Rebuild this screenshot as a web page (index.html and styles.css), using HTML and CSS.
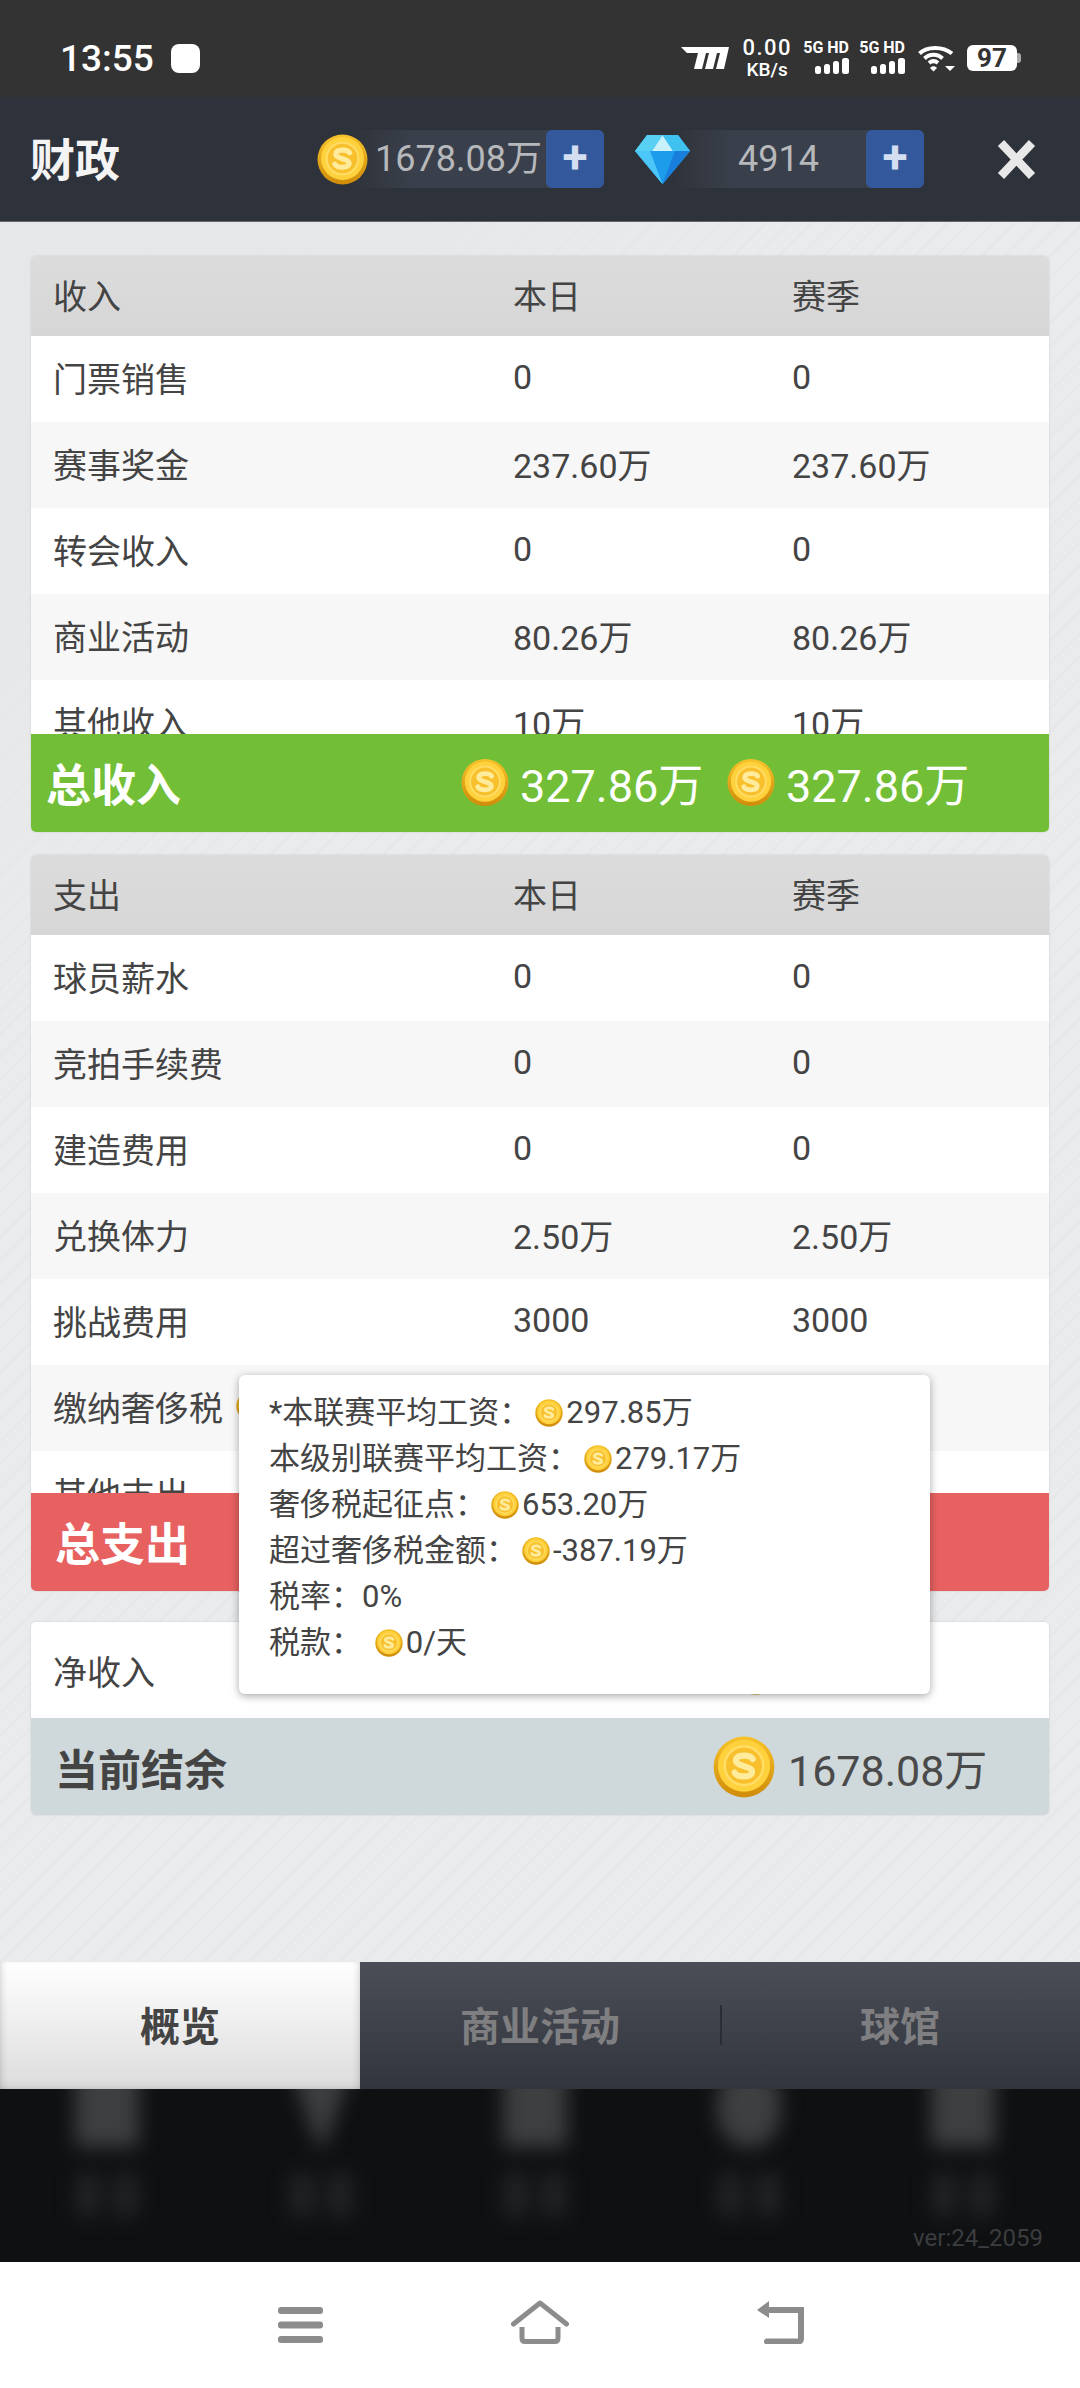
FILE: index.html
```html
<!DOCTYPE html>
<html lang="zh-CN">
<head>
  <meta charset="UTF-8">
  <title>财政</title>
  <meta name="viewport" content="width=device-width, initial-scale=1.0">
  <link rel="stylesheet" href="styles.css">
</head>
<body>
  <svg class="defs" width="0" height="0">
    <defs>
      <linearGradient id="coin-rim" x1="0" y1="0" x2="0" y2="1">
        <stop offset="0" stop-color="#f6c22a"/>
        <stop offset="1" stop-color="#d08c0a"/>
      </linearGradient>
      <symbol id="coin" viewBox="0 0 50 50">
        <circle cx="25" cy="25" r="24.500" fill="url(#coin-rim)"/>
        <circle cx="25" cy="24" r="21" fill="#ffd13d"/>
        <circle cx="25" cy="24" r="15.500" fill="#f8c02c" stroke="#ffdd66" stroke-width="2"/>
        <path d="M32 18.500c-2-3.500-13-4-13.500 1s13.500 4.500 13 9.500-12 4.500-14 .5" fill="none" stroke="#ffeb9c" stroke-width="5" stroke-linecap="round"/>
      </symbol>
    </defs>
  </svg>

  <div class="page">
    <div class="status-bar">
      <span class="clock">13:55</span>
      <span class="blob"></span>
      <div class="status-icons">
        <svg class="carrier" width="48" height="22" viewBox="0 0 48 22"><path d="M0 0h48l-5 22h-8l4-16h-3l-4 16h-8l4-16h-3l-4 16H13L17 6H6z" fill="#fff"/></svg>
        <div class="speed"><span class="speed-num">0.00</span><span class="speed-unit">KB/s</span></div>
        <div class="sim"><span class="sim-label">5G HD</span>
          <svg width="34" height="16" viewBox="0 0 34 16"><g fill="#fff"><rect x="0" y="8" width="6" height="8" rx="2.500"/><rect x="9" y="6" width="6" height="10" rx="2.500"/><rect x="18" y="3" width="6" height="13" rx="2.500"/><rect x="27" y="0" width="7" height="16" rx="2.500"/></g></svg>
        </div>
        <div class="sim"><span class="sim-label">5G HD</span>
          <svg width="34" height="16" viewBox="0 0 34 16"><g fill="#fff"><rect x="0" y="8" width="6" height="8" rx="2.500"/><rect x="9" y="6" width="6" height="10" rx="2.500"/><rect x="18" y="3" width="6" height="13" rx="2.500"/><rect x="27" y="0" width="7" height="16" rx="2.500"/></g></svg>
        </div>
        <svg class="wifi" width="37" height="27" viewBox="0 0 37 27">
          <g fill="none" stroke="#fff" stroke-width="4"><path d="M1.500 8.500C9 1 25 1 34 8.500"/><path d="M6.500 13.500c5-5 13-5 18 0"/><path d="M11 18c3-2.500 6-2.500 9 0"/></g>
          <path d="M12 23c2-2.500 5-2.500 7 0l-3.500 3.500z" fill="#fff"/>
          <path d="M27 21h10l-5 5z" fill="#fff"/>
        </svg>
        <div class="battery"><span class="battery-num">97</span></div>
      </div>
    </div>

    <header class="top-bar">
      <h1 class="title">财政</h1>
      <div class="currency">
        <svg class="coin-top"><use href="#coin"/></svg>
        <div class="pill"><span class="pill-value">1678.08万</span><span class="pill-plus">+</span></div>
      </div>
      <div class="currency second">
        <svg class="gem" width="55" height="50" viewBox="0 0 55 50">
          <polygon points="12,1 43,1 55,17 27.500,50 0,17" fill="#34b8f2"/>
          <polygon points="0,17 55,17 27.500,50" fill="#1e9cec"/>
          <polygon points="40,17 55,17 27.500,50" fill="#1a7fdc"/>
          <polygon points="0,17 15,17 27.500,50" fill="#4cc6f6"/>
          <polygon points="27.500,1 38,17 17,17" fill="#c9f1fb"/>
          <polygon points="12,1 27.500,1 17,17 0,17" fill="#58d0f4"/>
          <polygon points="43,1 27.500,1 38,17 55,17" fill="#3fc2f0"/>
        </svg>
        <div class="pill"><span class="pill-value">4914</span><span class="pill-plus">+</span></div>
      </div>
      <svg class="close" width="39" height="39" viewBox="0 0 39 39"><path d="M4 3l31 33M35 3L4 36" stroke="#e8e8e8" stroke-width="8.500" fill="none"/></svg>
    </header>

    <main class="content">
      <section class="panel">
        <div class="row head"><span>收入</span><span>本日</span><span>赛季</span></div>
        <div class="rows income">
          <div class="row"><span>门票销售</span><span>0</span><span>0</span></div>
          <div class="row"><span>赛事奖金</span><span>237.60万</span><span>237.60万</span></div>
          <div class="row"><span>转会收入</span><span>0</span><span>0</span></div>
          <div class="row"><span>商业活动</span><span>80.26万</span><span>80.26万</span></div>
          <div class="row"><span>其他收入</span><span>10万</span><span>10万</span></div>
        </div>
        <div class="total green">
          <span class="total-label">总收入</span>
          <span class="total-val"><svg class="coin-big"><use href="#coin"/></svg>327.86万</span>
          <span class="total-val"><svg class="coin-big"><use href="#coin"/></svg>327.86万</span>
        </div>
      </section>

      <section class="panel">
        <div class="row head"><span>支出</span><span>本日</span><span>赛季</span></div>
        <div class="rows spend">
          <div class="row"><span>球员薪水</span><span>0</span><span>0</span></div>
          <div class="row"><span>竞拍手续费</span><span>0</span><span>0</span></div>
          <div class="row"><span>建造费用</span><span>0</span><span>0</span></div>
          <div class="row"><span>兑换体力</span><span>2.50万</span><span>2.50万</span></div>
          <div class="row"><span>挑战费用</span><span>3000</span><span>3000</span></div>
          <div class="row"><span class="tax-cell">缴纳奢侈税<svg class="coin-row"><use href="#coin"/></svg></span></div>
          <div class="row"><span>其他支出</span></div>
        </div>
        <div class="total red"><span class="total-label">总支出</span></div>
      </section>

      <section class="panel">
        <div class="row net"><span>净收入</span><svg class="coin-net"><use href="#coin"/></svg></div>
        <div class="balance">
          <span class="balance-label">当前结余</span>
          <span class="balance-val"><svg class="coin-balance"><use href="#coin"/></svg>1678.08万</span>
        </div>
      </section>
    </main>

    <nav class="tabs">
      <div class="tab active">概览</div>
      <div class="tab">商业活动</div>
      <div class="tab split">球馆</div>
    </nav>

    <div class="game-nav">
      <div class="blur-items">
        <div class="blur-item"><i class="blur-icon"></i><div class="blur-label"><i></i><i></i></div></div>
        <div class="blur-item"><i class="blur-icon narrow"></i><div class="blur-label"><i></i><i></i></div></div>
        <div class="blur-item"><i class="blur-icon"></i><div class="blur-label"><i></i><i></i></div></div>
        <div class="blur-item"><i class="blur-icon round"></i><div class="blur-label"><i></i><i></i></div></div>
        <div class="blur-item"><i class="blur-icon"></i><div class="blur-label"><i></i><i></i></div></div>
      </div>
      <div class="version">ver:24_2059</div>
    </div>

    <div class="sys-nav">
      <svg width="45" height="36" viewBox="0 0 45 36"><g fill="#8c8c8c"><rect x="0" y="0" width="45" height="7" rx="3"/><rect x="0" y="14.500" width="45" height="7" rx="3"/><rect x="0" y="29" width="45" height="7" rx="3"/></g></svg>
      <svg width="58" height="44" viewBox="0 0 58 44"><path d="M2.500 24L29 3l26.500 21" fill="none" stroke="#8c8c8c" stroke-width="5" stroke-linejoin="round" stroke-linecap="round"/><path d="M11 27v11c0 2 1 3.500 3 3.500h30c2 0 3-1.500 3-3.500V27" fill="none" stroke="#8c8c8c" stroke-width="5"/></svg>
      <svg width="48" height="43" viewBox="0 0 48 43"><path d="M14 9h31v29c0 1.500-1 2.500-2.500 2.500H11" fill="none" stroke="#8c8c8c" stroke-width="6" stroke-linecap="round"/><path d="M13 0v17L1 9z" fill="#8c8c8c"/></svg>
    </div>

    <div class="tooltip">
      <div>*本联赛平均工资：<svg class="coin-tip"><use href="#coin"/></svg>297.85万</div>
      <div>本级别联赛平均工资：<svg class="coin-tip"><use href="#coin"/></svg>279.17万</div>
      <div>奢侈税起征点：<svg class="coin-tip"><use href="#coin"/></svg>653.20万</div>
      <div>超过奢侈税金额：<svg class="coin-tip"><use href="#coin"/></svg>-387.19万</div>
      <div>税率：0%</div>
      <div>税款： <svg class="coin-tip"><use href="#coin"/></svg>0/天</div>
    </div>
  </div>
</body>
</html>
```

FILE: styles.css
```css
* {
  box-sizing: border-box;
}
body {
  margin: 0;
  background: #fff;
  font-family: Roboto, "Noto Sans CJK SC", sans-serif;
  color: #444;
}
.defs {
  position: absolute;
}
.page {
  position: relative;
  width: 1080px;
  height: 2388px;
  display: flex;
  flex-direction: column;
  overflow: hidden;
}

/* status bar */
.status-bar {
  height: 97px;
  background: #333;
  color: #fff;
  display: flex;
  align-items: center;
  padding: 19px 0 0 60px;
  flex-shrink: 0;
}
.clock {
  font-size: 37px;
  font-weight: 500;
  line-height: 1;
}
.blob {
  width: 29px;
  height: 29px;
  background: #fff;
  border-radius: 8px;
  margin-left: 17px;
}
.status-icons {
  margin-left: auto;
  display: flex;
  align-items: center;
  padding-right: 63px;
}
.speed {
  display: flex;
  flex-direction: column;
  align-items: center;
  margin-left: 13px;
  font-weight: 500;
  line-height: 1;
}
.speed-num {
  font-size: 22px;
  letter-spacing: 1.5px;
}
.speed-unit {
  font-size: 19px;
  margin-top: 1px;
}
.sim {
  width: 46px;
  margin-left: 11px;
  display: flex;
  flex-direction: column;
  align-items: flex-end;
  gap: 5px;
}
.sim + .sim {
  margin-left: 10px;
}
.sim-label {
  font-size: 16px;
  font-weight: 700;
  line-height: 11px;
  white-space: nowrap;
}
.wifi {
  margin-left: 13px;
}
.battery {
  position: relative;
  width: 50px;
  height: 26px;
  margin-left: 12px;
  background: #fff;
  border-radius: 6px;
  display: flex;
  align-items: center;
  justify-content: center;
}
.battery::after {
  content: "";
  position: absolute;
  right: -4px;
  top: 8px;
  width: 4px;
  height: 10px;
  background: #aaa;
  border-radius: 0 3px 3px 0;
}
.battery-num {
  color: #333;
  font-size: 26px;
  font-weight: 700;
  line-height: 1;
}

/* top bar */
.top-bar {
  height: 125px;
  background: #2e323a;
  border-bottom: 1px solid #666;
  display: flex;
  align-items: center;
  padding-left: 30px;
  flex-shrink: 0;
}
.title {
  width: 287px;
  margin: 0 0 3px;
  color: #f4f4f4;
  font-size: 45px;
  font-weight: 700;
}
.currency {
  display: flex;
  align-items: center;
}
.currency.second {
  margin-left: 31px;
}
.coin-top {
  width: 51px;
  height: 53px;
  margin-right: -17px;
  position: relative;
  z-index: 1;
}
.gem {
  margin-right: -19px;
  position: relative;
  z-index: 1;
}
.pill {
  width: 253px;
  height: 58px;
  display: flex;
  border-radius: 6px;
  background: linear-gradient(to right, #2e323a, #3a404b 25%);
}
.pill-value {
  flex: 1;
  padding-left: 20px;
  text-align: center;
  color: #b6b8bb;
  font-size: 36px;
  line-height: 58px;
  white-space: nowrap;
}
.pill-plus {
  width: 58px;
  background: #33599c;
  border-radius: 6px;
  color: #d3def0;
  font-size: 46px;
  font-weight: 700;
  line-height: 54px;
  text-align: center;
}
.close {
  margin-left: 73px;
}

/* main area */
.content {
  flex: 1;
  padding: 34px 31px 0;
  display: flex;
  flex-direction: column;
  gap: 23px;
  background:
    linear-gradient(135deg, rgba(230, 231, 233, 0.9) 12%, rgba(230, 231, 233, 0) 30%),
    repeating-linear-gradient(135deg, #e9ebed 0, #e9ebed 13px, #e6e8ea 13px, #e6e8ea 16px);
}
.panel {
  background: #fff;
  border-radius: 5px;
  overflow: hidden;
  box-shadow: 0 0 2px rgba(0, 0, 0, 0.15);
}
.panel:last-child {
  margin-top: 8px;
}
.row {
  height: 86px;
  padding: 0 0 4px 22px;
  display: grid;
  grid-template-columns: 460px 279px 1fr;
  align-items: center;
  font-size: 34px;
  color: #444;
  background: #fff;
  white-space: nowrap;
}
.row.head {
  height: 80px;
  background: linear-gradient(to bottom, #dcdcdc, #d6d6d6);
}
.rows {
  overflow: hidden;
}
.rows.income {
  height: 398px;
}
.rows.spend {
  height: 558px;
}
.rows .row:nth-child(even) {
  background: #f7f7f7;
}
.tax-cell {
  display: flex;
  align-items: center;
}
.coin-row {
  width: 30px;
  height: 32px;
  margin-left: 13px;
}
.total {
  height: 98px;
  display: flex;
  align-items: center;
  color: #fff;
}
.total.green {
  background: #72bf37;
  padding: 0 0 2px 15px;
}
.total.red {
  background: #e86161;
  padding: 0 0 2px 24px;
}
.total-label {
  width: 415px;
  font-size: 45px;
  font-weight: 700;
}
.total-val {
  width: 266px;
  display: flex;
  align-items: center;
  font-size: 45px;
  white-space: nowrap;
}
.coin-big {
  width: 48px;
  height: 49px;
  margin-right: 11px;
}
.row.net {
  height: 96px;
  padding-bottom: 0;
  grid-template-columns: 678px 50px;
}
.coin-net {
  width: 50px;
  height: 50px;
}
.balance {
  height: 97px;
  background: #cfd8db;
  display: flex;
  align-items: center;
  padding-left: 24px;
}
.balance-label {
  width: 658px;
  font-size: 43px;
  font-weight: 700;
  color: #444;
}
.balance-val {
  display: flex;
  align-items: center;
  font-size: 43px;
  color: #4a4a4a;
  white-space: nowrap;
}
.coin-balance {
  width: 62px;
  height: 66px;
  margin-right: 13px;
}

/* tabs */
.tabs {
  height: 127px;
  display: grid;
  grid-template-columns: repeat(3, 1fr);
  background: linear-gradient(to bottom, #4a4e56, #32353d);
  flex-shrink: 0;
}
.tab {
  display: flex;
  align-items: center;
  justify-content: center;
  padding-bottom: 3px;
  font-size: 40px;
  font-weight: 700;
  color: #7f7f81;
  position: relative;
}
.tab.active {
  color: #444;
  background: linear-gradient(to bottom, #fff, #dcdcdc);
  box-shadow: inset 0 -6px 10px -6px rgba(0, 0, 0, 0.12), inset 6px 0 8px -6px rgba(0, 0, 0, 0.2), inset -6px 0 8px -6px rgba(0, 0, 0, 0.2);
}
.tab.split::before {
  content: "";
  position: absolute;
  left: 0;
  top: 43px;
  width: 2px;
  height: 40px;
  background: #2a2d33;
}

/* blurred game nav */
.game-nav {
  height: 173px;
  background: #0e1012;
  overflow: hidden;
  flex-shrink: 0;
}
.blur-items {
  height: 135px;
  display: grid;
  grid-template-columns: repeat(5, 214px);
  filter: blur(10px);
}
.blur-item {
  display: flex;
  flex-direction: column;
  align-items: center;
  margin-top: -24px;
}
.blur-icon {
  display: block;
  width: 64px;
  height: 82px;
  background: #3e3f41;
}
.blur-icon.narrow {
  clip-path: polygon(0 0, 100% 0, 55% 100%, 45% 100%);
}
.blur-icon.round {
  border-radius: 45%;
}
.blur-label {
  margin-top: 26px;
  display: flex;
  gap: 14px;
}
.blur-label i {
  display: block;
  width: 24px;
  height: 44px;
  background: #232426;
}
.version {
  height: 38px;
  padding-right: 37px;
  text-align: right;
  font-size: 24px;
  line-height: 28px;
  color: #3c3d3f;
}

/* system nav */
.sys-nav {
  height: 126px;
  background: #fff;
  display: grid;
  grid-template-columns: repeat(3, 240px);
  justify-content: center;
  justify-items: center;
  padding-top: 38px;
  flex-shrink: 0;
}
.sys-nav svg:first-child {
  margin-top: 7px;
}
.sys-nav svg:last-child {
  margin-top: 1px;
}

/* luxury tax tooltip */
.tooltip {
  position: absolute;
  left: 239px;
  top: 1375px;
  width: 691px;
  height: 319px;
  padding: 15px 30px 0;
  background: #fff;
  border-radius: 6px;
  box-shadow: 0 2px 8px rgba(0, 0, 0, 0.35);
  font-size: 31px;
  line-height: 46px;
  color: #444;
  white-space: nowrap;
}
.coin-tip {
  width: 28px;
  height: 30px;
  margin: 0 3px 0 5px;
  vertical-align: -5px;
}
```
